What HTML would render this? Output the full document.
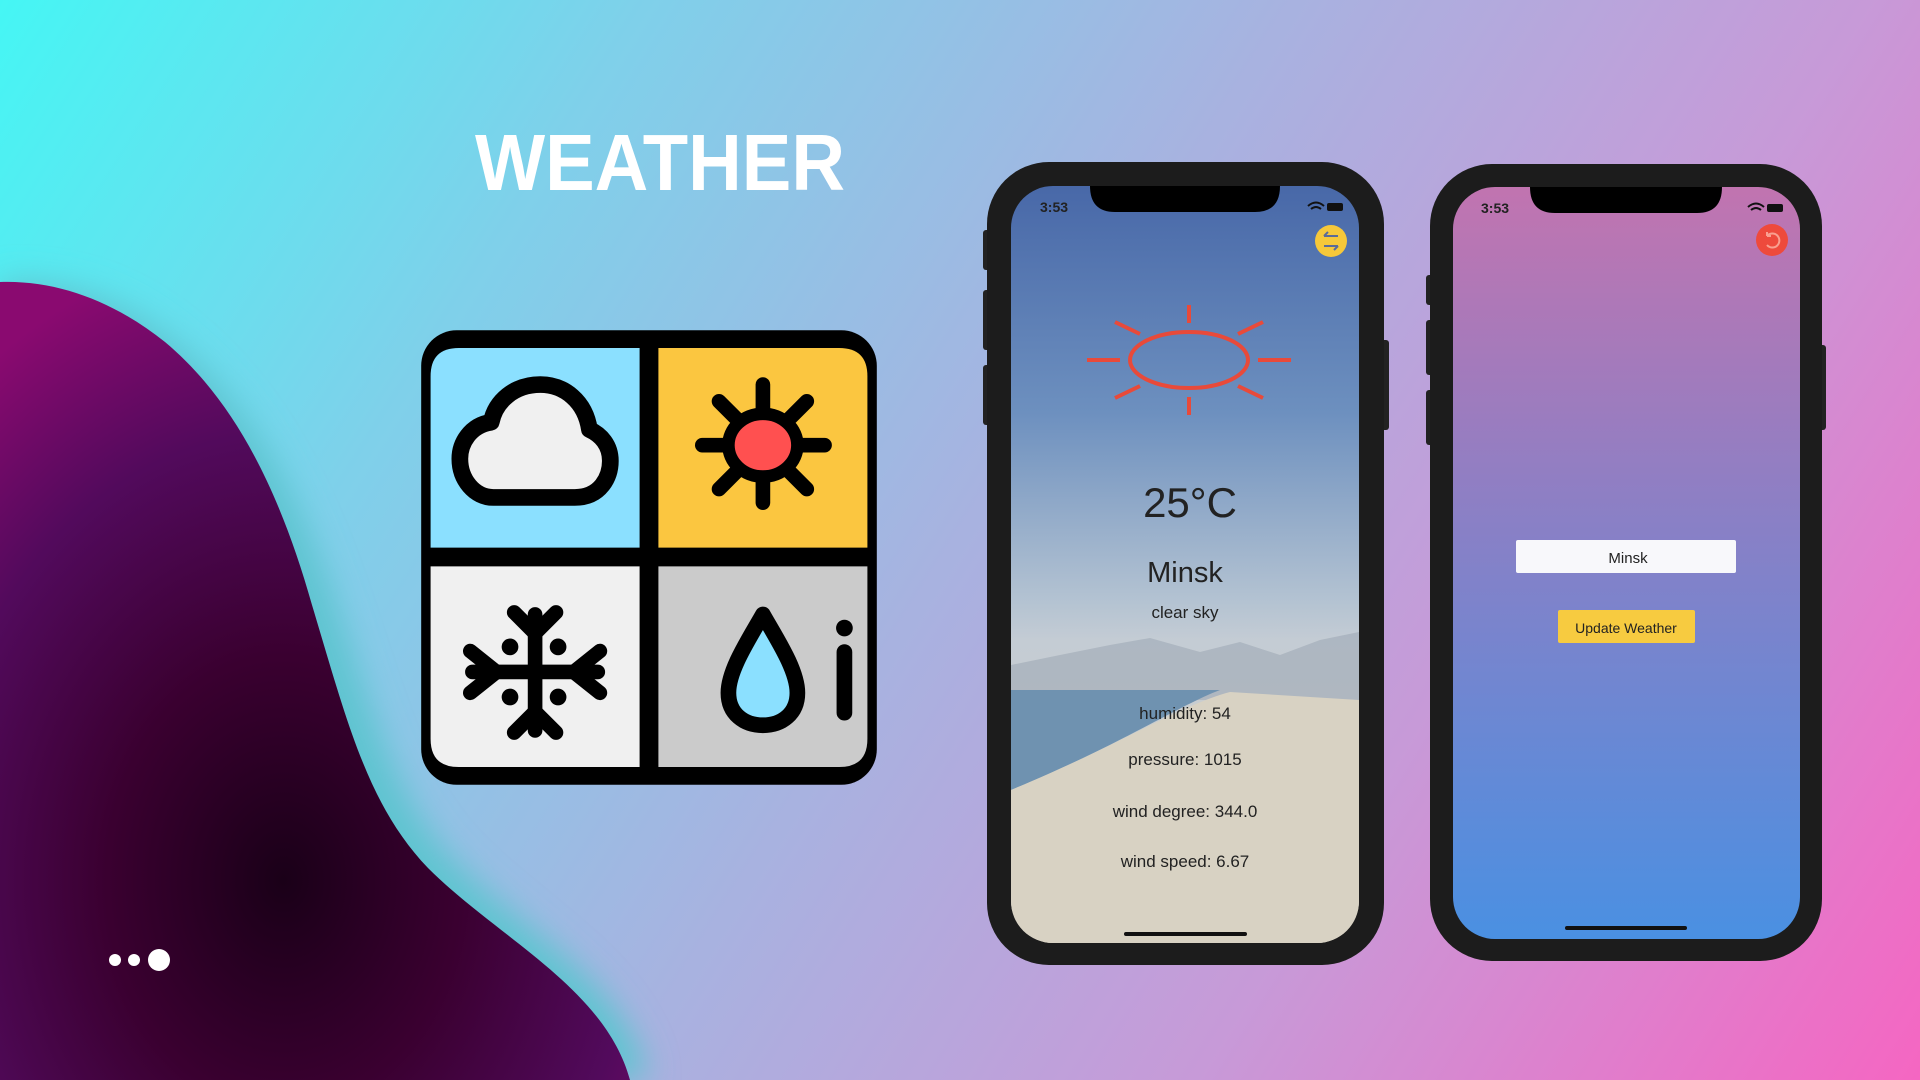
<!DOCTYPE html>
<html><head><meta charset="utf-8"><style>
html,body{margin:0;padding:0;width:1920px;height:1080px;overflow:hidden}
body{background:linear-gradient(122deg,#45f6f4 0%,#7fd0ea 25%,#a8b2e0 50%,#c79ad8 72%,#f566c2 100%);font-family:"Liberation Sans",sans-serif}
svg{position:absolute;left:0;top:0}
.t{font-family:"Liberation Sans",sans-serif;fill:#222}
</style></head><body>
<svg width="1920" height="1080" viewBox="0 0 1920 1080">
<defs>
<radialGradient id="bl" cx="0.45" cy="0.75" r="0.8">
<stop offset="0" stop-color="#1a0018"/><stop offset="0.35" stop-color="#3a0030"/><stop offset="0.7" stop-color="#520a5c"/><stop offset="1" stop-color="#8a0a70"/>
</radialGradient>
<filter id="bf"><feGaussianBlur stdDeviation="16"/></filter>
<linearGradient id="sky" x1="0" y1="0" x2="0" y2="1">
<stop offset="0" stop-color="#4868a8"/><stop offset="0.3" stop-color="#6d90bf"/><stop offset="0.55" stop-color="#b4c3d2"/><stop offset="0.6" stop-color="#c4ccd4"/><stop offset="1" stop-color="#d6d0c2"/>
</linearGradient>
<linearGradient id="ph2" x1="0" y1="0" x2="0" y2="1">
<stop offset="0" stop-color="#c174b0"/><stop offset="0.45" stop-color="#8980c6"/><stop offset="1" stop-color="#4a90e2"/>
</linearGradient>
<clipPath id="s1"><rect x="1011" y="186" width="348" height="757" rx="42"/></clipPath>
</defs>
<!-- blob -->
<path d="M0 282 C65 278 125 300 178 345 C250 405 298 490 338 610 C378 730 398 805 458 865 C528 935 628 985 648 1080 L0 1080 Z" fill="#5ec4d0" filter="url(#bf)"/>
<path d="M0 282 C58 280 115 302 165 342 C232 398 278 485 312 605 C348 725 368 805 428 868 C498 938 605 988 630 1080 L0 1080 Z" fill="url(#bl)"/>
<circle cx="115" cy="960" r="6" fill="#fff"/><circle cx="134" cy="960" r="6" fill="#fff"/><circle cx="159" cy="960" r="11" fill="#fff"/>
<text x="660" y="190" text-anchor="middle" font-family="Liberation Sans" font-weight="bold" font-size="80" textLength="370" lengthAdjust="spacingAndGlyphs" fill="#fff">WEATHER</text>
<!-- icon -->
<g transform="translate(649 557) scale(1.045) translate(-649 -557)">
<rect x="431" y="340" width="436" height="435" rx="34" fill="#000"/>
<path d="M467 357 H640 V548 H440 V384 Q440 357 467 357Z" fill="#8be0ff"/>
<path d="M658 357 H831 Q858 357 858 384 V548 H658Z" fill="#fbc640"/>
<path d="M440 566 H640 V758 H467 Q440 758 440 731Z" fill="#f0f0f0"/>
<path d="M658 566 H858 V731 Q858 758 831 758 H658Z" fill="#cbcbcb"/>
<path d="M500 500 H578 C603 500 612 480 612 465 C612 450 603 440 592 435 C588 408 568 392 545 392 C520 392 502 408 498 428 C478 431 468 448 468 463 C468 483 482 500 500 500Z" fill="#f0f0f0" stroke="#000" stroke-width="16" stroke-linejoin="round"/>
<g stroke="#000" stroke-width="14" stroke-linecap="round">
<line x1="758" y1="392" x2="758" y2="505"/><line x1="700" y1="450" x2="817" y2="450"/>
<line x1="716" y1="408" x2="800" y2="492"/><line x1="800" y1="408" x2="716" y2="492"/>
</g>
<ellipse cx="758" cy="450" rx="33" ry="30" fill="#ff5050" stroke="#000" stroke-width="12"/>
<g stroke="#000" stroke-width="14" stroke-linecap="round" fill="none">
<line x1="540" y1="612" x2="540" y2="723"/><line x1="480" y1="667" x2="600" y2="667"/>
<path d="M520 610 L540 630 L560 610"/><path d="M520 725 L540 705 L560 725"/>
<path d="M478 647 L503 667 L478 687"/><path d="M602 647 L577 667 L602 687"/>
</g>
<g fill="#000"><circle cx="516" cy="643" r="8"/><circle cx="562" cy="643" r="8"/><circle cx="516" cy="691" r="8"/><circle cx="562" cy="691" r="8"/></g>
<path d="M758 612 C745 635 725 665 725 687 C725 707 740 718 758 718 C776 718 791 707 791 687 C791 665 771 635 758 612Z" fill="#8be0ff" stroke="#000" stroke-width="15" stroke-linejoin="round"/>
<circle cx="836" cy="625" r="8" fill="#000"/><line x1="836" y1="648" x2="836" y2="706" stroke="#000" stroke-width="15" stroke-linecap="round"/>
</g>
<!-- phone 1 -->
<rect x="983" y="230" width="8" height="40" rx="3" fill="#222"/><rect x="983" y="290" width="8" height="60" rx="3" fill="#222"/><rect x="983" y="365" width="8" height="60" rx="3" fill="#222"/><rect x="1381" y="340" width="8" height="90" rx="3" fill="#222"/>
<rect x="987" y="162" width="397" height="803" rx="62" fill="#1c1c1c"/>
<g clip-path="url(#s1)">
<rect x="1011" y="186" width="348" height="757" fill="url(#sky)"/>
<path d="M1011 665 L1060 655 L1110 645 L1150 638 L1200 652 L1240 642 L1280 655 L1320 640 L1359 632 V700 H1011Z" fill="#9aa5b3" opacity="0.55"/>
<path d="M1011 690 H1220 C1180 705 1120 745 1011 790Z" fill="#6f92b0"/>
<path d="M1011 790 C1120 745 1180 705 1230 692 L1359 700 V943 H1011Z" fill="#d8d2c3"/>
</g>
<path d="M1090 186 Q1090 212 1115 212 H1255 Q1280 212 1280 186Z" fill="#000"/>
<text x="1040" y="212" font-size="14" font-weight="bold" fill="#222">3:53</text>
<path d="M1308 206 q8 -7 16 0 M1311 209 q5 -4 10 0" stroke="#111" stroke-width="2" fill="none"/><rect x="1327" y="203" width="16" height="8" rx="2" fill="#111"/>
<circle cx="1331" cy="241" r="16" fill="#f6c83a"/>
<path d="M1324 236 H1338 M1324 236 l4 -4 M1338 246 H1324 M1338 246 l-4 4" stroke="#5a6a9a" stroke-width="2" fill="none"/>
<g stroke="#e84a3a" stroke-width="4" fill="none">
<ellipse cx="1189" cy="360" rx="59" ry="28"/>
<line x1="1189" y1="305" x2="1189" y2="323"/><line x1="1189" y1="397" x2="1189" y2="415"/>
<line x1="1087" y1="360" x2="1120" y2="360"/><line x1="1258" y1="360" x2="1291" y2="360"/>
<line x1="1115" y1="322" x2="1140" y2="334"/><line x1="1263" y1="322" x2="1238" y2="334"/>
<line x1="1115" y1="398" x2="1140" y2="386"/><line x1="1263" y1="398" x2="1238" y2="386"/>
</g>
<text class="t" x="1190" y="517" text-anchor="middle" font-size="42">25°C</text>
<text class="t" x="1185" y="582" text-anchor="middle" font-size="29">Minsk</text>
<text class="t" x="1185" y="618" text-anchor="middle" font-size="17">clear sky</text>
<text class="t" x="1185" y="719" text-anchor="middle" font-size="17">humidity: 54</text>
<text class="t" x="1185" y="765" text-anchor="middle" font-size="17">pressure: 1015</text>
<text class="t" x="1185" y="817" text-anchor="middle" font-size="17">wind degree: 344.0</text>
<text class="t" x="1185" y="867" text-anchor="middle" font-size="17">wind speed: 6.67</text>
<rect x="1124" y="932" width="123" height="4" rx="2" fill="#111"/>
<!-- phone 2 -->
<rect x="1426" y="275" width="8" height="30" rx="3" fill="#222"/><rect x="1426" y="320" width="8" height="55" rx="3" fill="#222"/><rect x="1426" y="390" width="8" height="55" rx="3" fill="#222"/><rect x="1818" y="345" width="8" height="85" rx="3" fill="#222"/>
<rect x="1430" y="164" width="392" height="797" rx="62" fill="#1c1c1c"/>
<rect x="1453" y="187" width="347" height="752" rx="42" fill="url(#ph2)"/>
<path d="M1530 187 Q1530 213 1555 213 H1697 Q1722 213 1722 187Z" fill="#000"/>
<text x="1481" y="213" font-size="14" font-weight="bold" fill="#222">3:53</text>
<path d="M1748 207 q8 -7 16 0 M1751 210 q5 -4 10 0" stroke="#111" stroke-width="2" fill="none"/><rect x="1767" y="204" width="16" height="8" rx="2" fill="#111"/>
<circle cx="1772" cy="240" r="16" fill="#ee4a3c"/>
<path d="M1767 236 a7 7 0 1 1 0 9 M1767 236 l0 -4 M1767 236 l4 0" stroke="#f9a090" stroke-width="2" fill="none"/>
<rect x="1516" y="540" width="220" height="33" rx="2" fill="#f8f8fb"/>
<text class="t" x="1628" y="563" text-anchor="middle" font-size="15">Minsk</text>
<rect x="1558" y="610" width="137" height="33" rx="2" fill="#f7cb40"/>
<text class="t" x="1626" y="633" text-anchor="middle" font-size="14">Update Weather</text>
<rect x="1565" y="926" width="122" height="4" rx="2" fill="#111"/>
</svg>
</body></html>
